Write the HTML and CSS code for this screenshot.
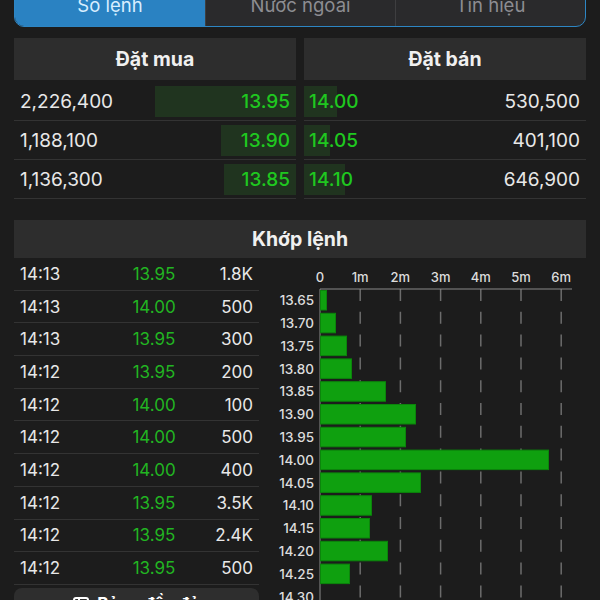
FILE: index.html
```html
<!DOCTYPE html>
<html lang="vi">
<head>
<meta charset="utf-8">
<link rel="stylesheet" href="styles.css">
</head>
<body>
<div class="page">
  <div class="tabs">
    <div class="tab active">Sổ lệnh</div>
    <div class="tab">Nước ngoài</div>
    <div class="tab">Tín hiệu</div>
  </div>

  <div class="book">
    <div class="side bid">
      <div class="side-head">Đặt mua</div>
      <div class="brow"><span class="vol">2,226,400</span><i class="depth" style="width:141px"></i><span class="px">13.95</span></div>
      <div class="brow"><span class="vol">1,188,100</span><i class="depth" style="width:75px"></i><span class="px">13.90</span></div>
      <div class="brow"><span class="vol">1,136,300</span><i class="depth" style="width:72px"></i><span class="px">13.85</span></div>
    </div>
    <div class="side ask">
      <div class="side-head">Đặt bán</div>
      <div class="brow"><i class="depth" style="width:33px"></i><span class="px">14.00</span><span class="vol">530,500</span></div>
      <div class="brow"><i class="depth" style="width:26px"></i><span class="px">14.05</span><span class="vol">401,100</span></div>
      <div class="brow"><i class="depth" style="width:41px"></i><span class="px">14.10</span><span class="vol">646,900</span></div>
    </div>
  </div>

  <div class="match-head">Khớp lệnh</div>

  <div class="lower">
    <div class="trades">
      <div class="trow"><span>14:13</span><span class="g">13.95</span><span class="q">1.8K</span></div>
      <div class="trow"><span>14:13</span><span class="g">14.00</span><span class="q">500</span></div>
      <div class="trow"><span>14:13</span><span class="g">13.95</span><span class="q">300</span></div>
      <div class="trow"><span>14:12</span><span class="g">13.95</span><span class="q">200</span></div>
      <div class="trow"><span>14:12</span><span class="g">14.00</span><span class="q">100</span></div>
      <div class="trow"><span>14:12</span><span class="g">14.00</span><span class="q">500</span></div>
      <div class="trow"><span>14:12</span><span class="g">14.00</span><span class="q">400</span></div>
      <div class="trow"><span>14:12</span><span class="g">13.95</span><span class="q">3.5K</span></div>
      <div class="trow"><span>14:12</span><span class="g">13.95</span><span class="q">2.4K</span></div>
      <div class="trow"><span>14:12</span><span class="g">13.95</span><span class="q">500</span></div>
      <div class="more">
        <svg class="more-ico" width="16" height="14" viewBox="0 0 16 14"><rect x="1" y="1" width="14" height="12" rx="2" fill="none" stroke="#fff" stroke-width="2"/><line x1="6" y1="1" x2="6" y2="13" stroke="#fff" stroke-width="2"/></svg>
        <span>Bảng đầy đủ</span>
      </div>
    </div>

    <div class="chart">
      <svg width="327" height="342" viewBox="0 0 327 342">
        <g font-size="13" font-weight="500" fill="#dcdcdc" text-anchor="middle">
          <text x="61" y="24">0</text>
          <text x="101.2" y="24">1m</text>
          <text x="141.4" y="24">2m</text>
          <text x="181.6" y="24">3m</text>
          <text x="221.8" y="24">4m</text>
          <text x="262" y="24">5m</text>
          <text x="302.2" y="24">6m</text>
        </g>
        <g stroke="#6c6c6c" stroke-width="1.5" stroke-dasharray="12 10.8">
          <line x1="101.2" y1="31" x2="101.2" y2="342"/>
          <line x1="141.4" y1="31" x2="141.4" y2="342"/>
          <line x1="181.6" y1="31" x2="181.6" y2="342"/>
          <line x1="221.8" y1="31" x2="221.8" y2="342"/>
          <line x1="262" y1="31" x2="262" y2="342"/>
          <line x1="302.2" y1="31" x2="302.2" y2="342"/>
        </g>
        <line x1="61" y1="31" x2="313" y2="31" stroke="#8a8a8a" stroke-width="1"/>
        <line x1="61" y1="31" x2="61" y2="342" stroke="#8a8a8a" stroke-width="1"/>
        <g fill="#0fa00f" stroke="#0b850b" stroke-width="1">
          <rect x="61.5" y="32.5" width="6" height="19.5"/>
          <rect x="61.5" y="55.3" width="15" height="19.5"/>
          <rect x="61.5" y="78.1" width="26" height="19.5"/>
          <rect x="61.5" y="100.9" width="31" height="19.5"/>
          <rect x="61.5" y="123.7" width="65" height="19.5"/>
          <rect x="61.5" y="146.5" width="95" height="19.5"/>
          <rect x="61.5" y="169.3" width="85" height="19.5"/>
          <rect x="61.5" y="192.1" width="228" height="19.5"/>
          <rect x="61.5" y="214.9" width="100" height="19.5"/>
          <rect x="61.5" y="237.7" width="51" height="19.5"/>
          <rect x="61.5" y="260.5" width="49" height="19.5"/>
          <rect x="61.5" y="283.3" width="67" height="19.5"/>
          <rect x="61.5" y="306.1" width="29" height="19.5"/>
        </g>
        <g font-size="13.5" font-weight="500" fill="#dcdcdc" text-anchor="end">
          <text x="55" y="47.1">13.65</text>
          <text x="55" y="69.9">13.70</text>
          <text x="55" y="92.7">13.75</text>
          <text x="55" y="115.5">13.80</text>
          <text x="55" y="138.3">13.85</text>
          <text x="55" y="161.1">13.90</text>
          <text x="55" y="183.9">13.95</text>
          <text x="55" y="206.7">14.00</text>
          <text x="55" y="229.5">14.05</text>
          <text x="55" y="252.3">14.10</text>
          <text x="55" y="275.1">14.15</text>
          <text x="55" y="297.9">14.20</text>
          <text x="55" y="320.7">14.25</text>
          <text x="55" y="343.5">14.30</text>
        </g>
      </svg>
    </div>
  </div>
</div>
</body>
</html>
```

FILE: styles.css
```css
* { box-sizing: border-box; }
html, body { margin: 0; height: 600px; overflow: hidden; }
body {
  background: #1c1c1c;
  color: #e8e8e8;
  font-family: Inter, "Noto Sans", "DejaVu Sans", sans-serif;
}
.page { padding: 0 14px; }

.tabs {
  display: grid;
  grid-template-columns: repeat(3, 1fr);
  height: 44px;
  margin-top: -17px;
  border: 1px solid #2d86c4;
  border-radius: 10px;
  overflow: hidden;
  background: #2a2a2c;
}
.tab {
  display: flex;
  align-items: center;
  justify-content: center;
  font-size: 18.5px;
  color: #8d8d92;
  border-left: 1px solid #3e3e40;
}
.tab.active {
  background: #2a82c2;
  color: #d8eeff;
  border-left: 0;
}

.book {
  display: grid;
  grid-template-columns: 1fr 1fr;
  column-gap: 8px;
  margin-top: 11px;
}
.side-head {
  height: 42px;
  margin-bottom: 2px;
  background: #2d2d2d;
  display: flex;
  align-items: center;
  justify-content: center;
  font-weight: 700;
  font-size: 19.5px;
  color: #f0f0f0;
}
.brow {
  position: relative;
  height: 39px;
  border-bottom: 1px solid #333;
  display: flex;
  align-items: center;
  justify-content: space-between;
  padding: 0 6px 0 6px;
  font-size: 19px;
}
.ask .brow { padding-left: 5px; }
.brow .vol { color: #e8e8e8; }
.brow .px { color: #1fc81f; position: relative; font-weight: 500; }
.depth {
  position: absolute;
  top: 4px;
  bottom: 3px;
  background: #20341f;
}
.bid .depth { right: 0; }
.ask .depth { left: 0; }

.match-head {
  margin-top: 21px;
  height: 38px;
  background: #2d2d2d;
  display: flex;
  align-items: center;
  justify-content: center;
  font-weight: 700;
  font-size: 19.5px;
  color: #f0f0f0;
}

.lower {
  display: grid;
  grid-template-columns: 245px 1fr;
}
.trow {
  height: 32.7px;
  border-bottom: 1px solid #333;
  display: grid;
  grid-template-columns: 94px 80px 1fr;
  align-items: center;
  padding: 0 6px;
  font-size: 17px;
  color: #e8e8e8;
}
.trow .g { color: #22b522; text-align: center; }
.trow .q { text-align: right; }

.more {
  margin-top: 3px;
  height: 32px;
  background: #2e2e2e;
  border-radius: 8px 8px 0 0;
  display: flex;
  align-items: center;
  justify-content: center;
  gap: 8px;
  font-weight: 700;
  font-size: 17px;
  color: #fff;
}
.chart svg { display: block; font-family: Inter, "Noto Sans", sans-serif; }
```
